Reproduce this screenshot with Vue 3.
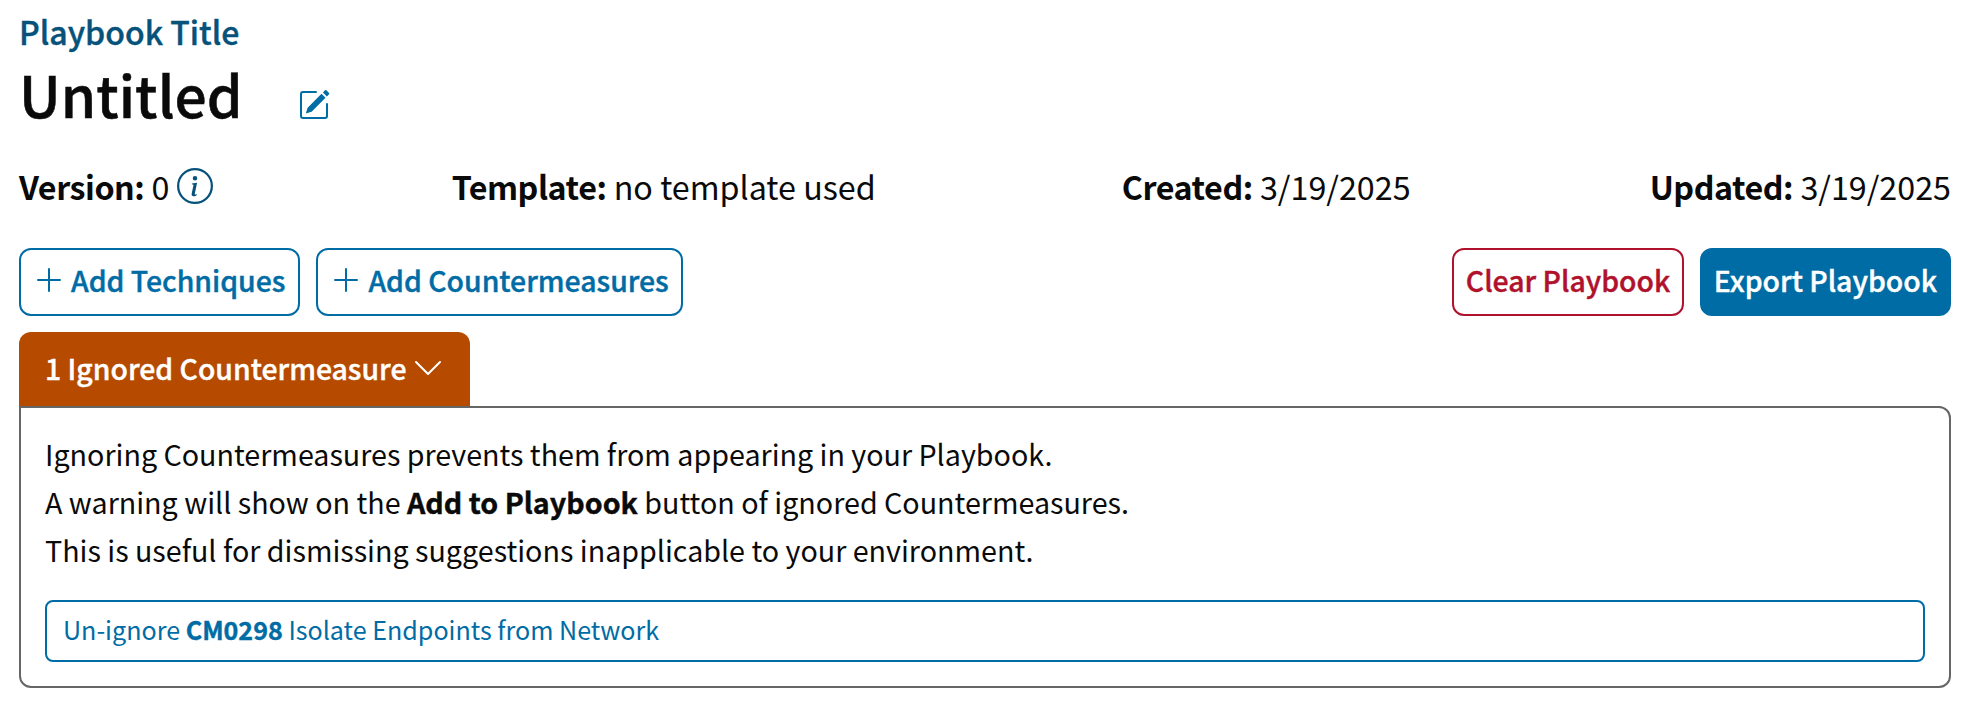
<script setup>
const meta = [
  { label: 'Version:', value: '0', info: true },
  { label: 'Template:', value: 'no template used', wide: true },
  { label: 'Created:', value: '3/19/2025' },
  { label: 'Updated:', value: '3/19/2025' },
]
const addButtons = ['Add Techniques', 'Add Countermeasures']
</script>

<template>
  <main class="playbook">
    <div class="eyebrow">Playbook Title</div>
    <div class="title-row">
      <h1>Untitled</h1>
      <svg class="edit" viewBox="0 0 16 16" fill="currentColor">
        <path d="M15.502 1.94a.5.5 0 0 1 0 .706L14.459 3.69l-2-2L13.502.646a.5.5 0 0 1 .707 0l1.293 1.293zm-1.75 2.456-2-2L4.939 9.21a.5.5 0 0 0-.121.196l-.805 2.414a.25.25 0 0 0 .316.316l2.414-.805a.5.5 0 0 0 .196-.12l6.813-6.814z" />
        <path fill-rule="evenodd" d="M1 13.5A1.5 1.5 0 0 0 2.5 15h11a1.5 1.5 0 0 0 1.5-1.5v-6a.5.5 0 0 0-1 0v6a.5.5 0 0 1-.5.5h-11a.5.5 0 0 1-.5-.5v-11a.5.5 0 0 1 .5-.5H9a.5.5 0 0 0 0-1H2.5A1.5 1.5 0 0 0 1 2.5z" />
      </svg>
    </div>

    <div class="meta">
      <div v-for="m in meta" :key="m.label" class="meta-item" :class="{ wide: m.wide }">
        <span><b>{{ m.label }}</b> {{ m.value }}</span>
        <svg v-if="m.info" class="info" viewBox="0 0 16 16" fill="currentColor">
          <path d="M8 15A7 7 0 1 1 8 1a7 7 0 0 1 0 14m0 1A8 8 0 1 0 8 0a8 8 0 0 0 0 16" />
          <path d="m8.93 6.588-2.29.287-.082.38.45.083c.294.07.352.176.288.469l-.738 3.468c-.194.897.105 1.319.808 1.319.545 0 1.178-.252 1.465-.598l.088-.416c-.2.176-.492.246-.686.246-.275 0-.375-.193-.304-.533zM9 4.5a1 1 0 1 1-2 0 1 1 0 0 1 2 0" />
        </svg>
      </div>
    </div>

    <div class="actions">
      <button v-for="b in addButtons" :key="b" class="btn outline">
        <svg class="icon" viewBox="0 0 16 16" fill="currentColor">
          <path d="M8 2a.5.5 0 0 1 .5.5v5h5a.5.5 0 0 1 0 1h-5v5a.5.5 0 0 1-1 0v-5h-5a.5.5 0 0 1 0-1h5v-5A.5.5 0 0 1 8 2" />
        </svg>
        <span>{{ b }}</span>
      </button>
      <button class="btn danger">Clear Playbook</button>
      <button class="btn primary">Export Playbook</button>
    </div>

    <button class="tab">
      <span>1 Ignored Countermeasure</span>
      <svg class="icon" viewBox="0 0 16 16" fill="currentColor">
        <path fill-rule="evenodd" d="M1.646 4.646a.5.5 0 0 1 .708 0L8 10.293l5.646-5.647a.5.5 0 0 1 .708.708l-6 6a.5.5 0 0 1-.708 0l-6-6a.5.5 0 0 1 0-.708" />
      </svg>
    </button>
    <section class="panel">
      <p>Ignoring Countermeasures prevents them from appearing in your Playbook.</p>
      <p>A warning will show on the <strong>Add to Playbook</strong> button of ignored Countermeasures.</p>
      <p>This is useful for dismissing suggestions inapplicable to your environment.</p>
      <button class="unignore">Un-ignore <strong>CM0298</strong> Isolate Endpoints from Network</button>
    </section>
  </main>
</template>

<style>
body { background: #fff; }
</style>

<style scoped>
.playbook {
  box-sizing: border-box;
  width: 1983px;
  height: 710px;
  padding: 8px 32px 0 19px;
  overflow: hidden;
  font: 28.66px/48px "Noto Sans CJK SC", "Noto Sans", sans-serif;
  color: #0a0a0a;
}
.eyebrow {
  height: 46px;
  line-height: 46px;
  font-size: 32.03px;
  font-weight: 500;
  color: #07527a;
  -webkit-text-stroke: 0.4px currentColor;
}
.title-row {
  display: flex;
  height: 84px;
}
h1 {
  margin: 0;
  width: 279px;
  font-size: 56.9px;
  line-height: 79px;
  font-weight: 500;
  -webkit-text-stroke: 0.5px currentColor;
}
.edit {
  width: 32px;
  height: 32px;
  margin-top: 34.5px;
  color: #006ca5;
}
.meta {
  display: flex;
  justify-content: space-between;
  height: 50px;
  margin-top: 24px;
  font-size: 32.26px;
}
.meta-item {
  display: flex;
  white-space: nowrap;
}
.meta-item.wide { margin-right: 7px; }
.meta-item b {
  font-weight: 700;
  letter-spacing: -0.45px;
}
.info {
  width: 36px;
  height: 36px;
  margin: 6px 0 0 7px;
  color: #07527a;
}
.actions {
  display: flex;
  gap: 16px;
  margin-top: 36px;
}
button {
  box-sizing: border-box;
  margin: 0;
  font-family: inherit;
  white-space: nowrap;
}
.btn {
  display: flex;
  align-items: center;
  justify-content: center;
  height: 68px;
  padding: 0 12px 4px;
  border: 2px solid currentColor;
  border-radius: 12px;
  background: #fff;
  font-size: 28.4px;
  line-height: 48px;
  font-weight: 500;
  -webkit-text-stroke: 0.4px currentColor;
}
.icon {
  width: 32px;
  height: 32px;
  flex: none;
}
.outline { color: #006ca5; }
.outline:first-child { padding-right: 13px; }
.outline span { margin-left: 6px; }
.danger {
  margin-left: auto;
  padding: 0 11.5px 4px;
  color: #b0122d;
}
.primary {
  color: #fff;
  background: #006ca5;
  border-color: #006ca5;
}
.tab {
  display: flex;
  align-items: center;
  width: 451px;
  height: 74px;
  margin-top: 16px;
  padding: 0 26px 3px;
  border: 0;
  border-radius: 12px 12px 0 0;
  background: #b64b00;
  color: #fff;
  font-size: 28.4px;
  line-height: 48px;
  font-weight: 500;
  -webkit-text-stroke: 0.4px currentColor;
}
.tab .icon { margin-left: 6px; }
.panel {
  box-sizing: border-box;
  height: 282px;
  padding: 22px 24px 24px;
  border: 2px solid #666;
  border-radius: 0 12px 12px 12px;
  border-top-left-radius: 0;
}
p { margin: 0; }
strong {
  font-weight: 700;
  -webkit-text-stroke: 0.4px currentColor;
}
.unignore {
  display: block;
  width: 100%;
  height: 62px;
  margin-top: 26px;
  padding: 0 16px 4px;
  border: 2px solid #006ca5;
  border-radius: 8px;
  background: #fff;
  color: #006ca5;
  font-size: 25.1px;
  text-align: left;
}
</style>
